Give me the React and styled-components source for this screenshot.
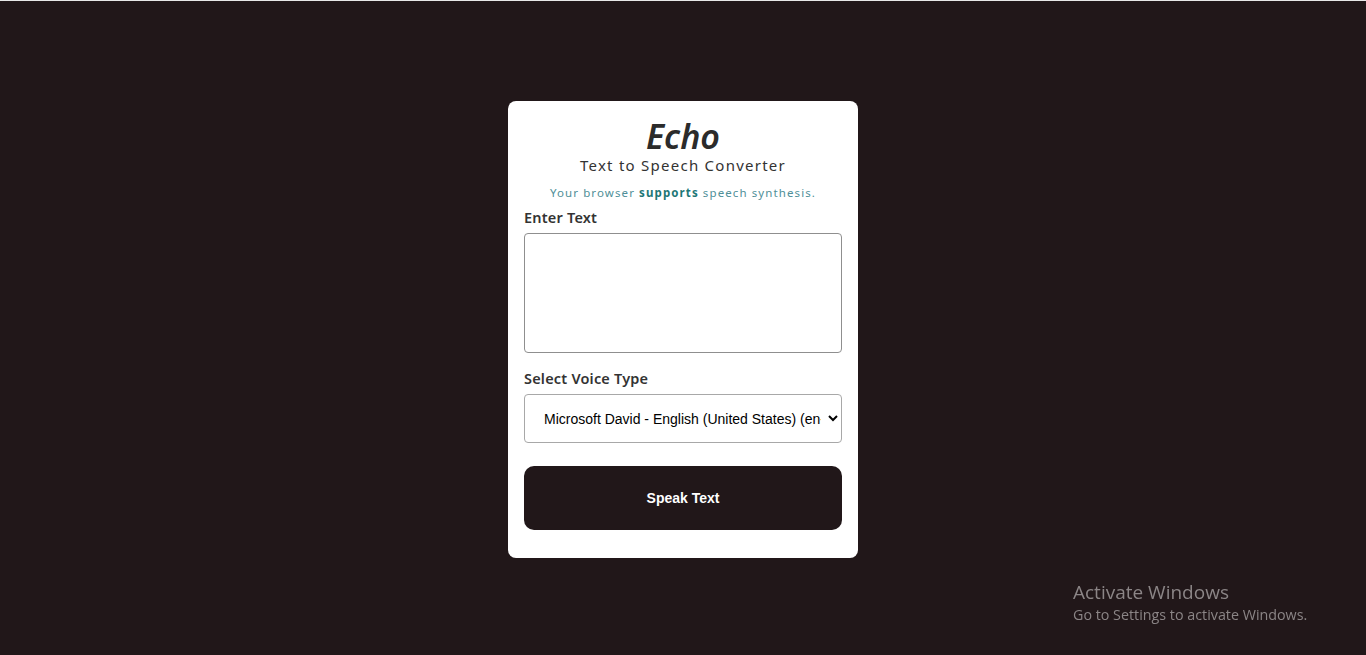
import styled, { createGlobalStyle } from "styled-components";

const GlobalStyle = createGlobalStyle`
  html, body {
    margin: 0;
    padding: 0;
    background: #211719;
  }
  * { box-sizing: border-box; }
`;

export default function App() {
  return (
    <>
      <GlobalStyle />
      <Page>
        <Card>
          <Header>
            <Title>Echo</Title>
            <Subtitle>Text to Speech Converter</Subtitle>
            <Status>
              Your browser <strong>supports</strong> speech synthesis.
            </Status>
          </Header>
          <Field>
            <Label htmlFor="text">Enter Text</Label>
            <TextArea id="text" />
          </Field>
          <Field $gap={16}>
            <Label htmlFor="voice">Select Voice Type</Label>
            <Select id="voice" defaultValue="david">
              <option value="david">Microsoft David - English (United States) (en-US)</option>
              <option value="zira">Microsoft Zira - English (United States) (en-US)</option>
            </Select>
          </Field>
          <Button>Speak Text</Button>
        </Card>
        <Watermark>
          <WatermarkTitle>Activate Windows</WatermarkTitle>
          <WatermarkText>Go to Settings to activate Windows.</WatermarkText>
        </Watermark>
      </Page>
    </>
  );
}

const Page = styled.div`
  min-height: 655px;
  border-top: 1px solid #e8e8e8;
  display: flex;
  justify-content: center;
  align-items: flex-start;
  padding-top: 100px;
  font-family: "Noto Sans", "DejaVu Sans", sans-serif;
`;

const Card = styled.div`
  width: 350px;
  background: #fff;
  border-radius: 8px;
  padding: 16px 16px 28px;
  display: flex;
  flex-direction: column;
`;

const Header = styled.div`
  display: flex;
  flex-direction: column;
  align-items: center;
`;

const Title = styled.h1`
  margin: 0;
  font-size: 34px;
  line-height: 39px;
  font-style: italic;
  font-weight: 600;
  color: #2b2b2b;
`;

const Subtitle = styled.h2`
  margin: 0;
  font-size: 15px;
  line-height: 18px;
  font-weight: 400;
  color: #333;
  letter-spacing: 1.25px;
`;

const Status = styled.p`
  margin: 11px 0 0;
  font-size: 11.5px;
  line-height: 16px;
  color: #4f8f98;
  letter-spacing: 1.1px;

  strong {
    color: #1d7776;
    font-weight: 700;
  }
`;

const Field = styled.div`
  display: flex;
  flex-direction: column;
  gap: 7px;
  margin-top: ${(p) => p.$gap || 7}px;
`;

const Label = styled.label`
  font-size: 14.5px;
  font-weight: 600;
  color: #333;
  line-height: 18px;
  letter-spacing: 0.2px;
`;

const TextArea = styled.textarea`
  height: 120px;
  width: 100%;
  border: 1px solid #8f8f8f;
  border-radius: 4px;
  resize: none;
  font-family: inherit;
`;

const Select = styled.select`
  height: 49px;
  width: 100%;
  border: 1px solid #a8a8a8;
  border-radius: 4px;
  background: #fff;
  padding: 0 4px 0 15px;
  font-family: "Liberation Sans", Arial, sans-serif;
  font-size: 14px;
  color: #000;
`;

const Button = styled.button`
  margin-top: 23px;
  height: 64px;
  width: 100%;
  border: none;
  border-radius: 10px;
  background: #211719;
  color: #fff;
  font-family: "Liberation Sans", Arial, sans-serif;
  font-weight: 700;
  font-size: 14px;
  cursor: pointer;
`;

const Watermark = styled.div`
  position: fixed;
  left: 1073px;
  top: 580px;
  font-family: "Open Sans", "Noto Sans", sans-serif;
  color: #8b8586;
`;

const WatermarkTitle = styled.div`
  font-size: 19px;
  line-height: 24px;
`;

const WatermarkText = styled.div`
  font-size: 14.3px;
  line-height: 21px;
`;
